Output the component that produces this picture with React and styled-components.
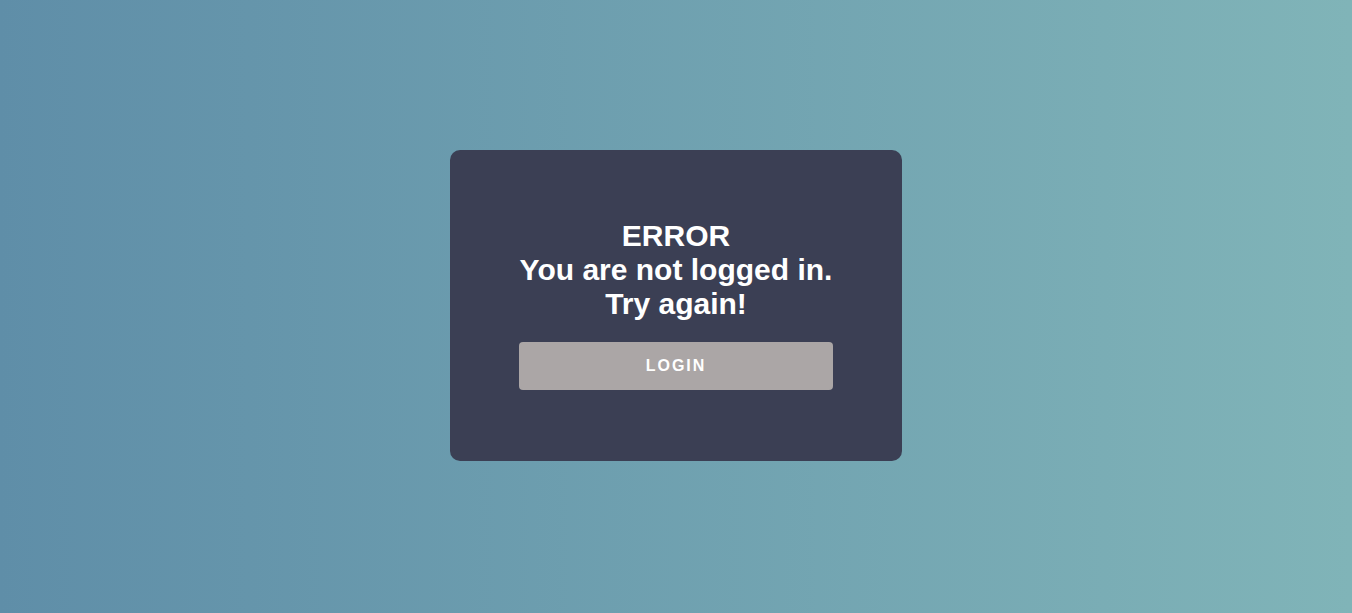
import React from 'react';
import styled, { createGlobalStyle } from 'styled-components';

const GlobalStyle = createGlobalStyle`
    html, body, #root {
        margin: 0;
        height: 100%;
    }
    body {
        font-family: "Liberation Sans", Arial, sans-serif;
    }
`

const Page = styled.div`
    min-height: 100vh;
    display: flex;
    align-items: center;
    justify-content: center;
    background: linear-gradient(to right, #5f8ea8, #80b4b8);
`

const Card = styled.div`
    width: 452px;
    box-sizing: border-box;
    margin-bottom: 2px;
    padding: 69px 69px 71px;
    background-color: #3b3f54;
    border-radius: 10px;
    display: flex;
    flex-direction: column;
    align-items: stretch;
`

const Message = styled.h2`
    margin: 0 0 21px;
    color: #fff;
    font-size: 30px;
    line-height: 34px;
    font-weight: bold;
    text-align: center;
`

const Button = styled.button`
    height: 48px;
    border: none;
    border-radius: 4px;
    background-color: #aba6a6;
    color: #fff;
    font-family: "Liberation Sans", Arial, sans-serif;
    font-size: 16px;
    font-weight: bold;
    letter-spacing: 2px;
    cursor: pointer;
`

const App = () => {
    return (
        <>
            <GlobalStyle />
            <Page>
                <Card>
                    <Message>
                        ERROR<br />
                        You are not logged in.<br />
                        Try again!
                    </Message>
                    <Button>LOGIN</Button>
                </Card>
            </Page>
        </>
    )
};
export default App;
